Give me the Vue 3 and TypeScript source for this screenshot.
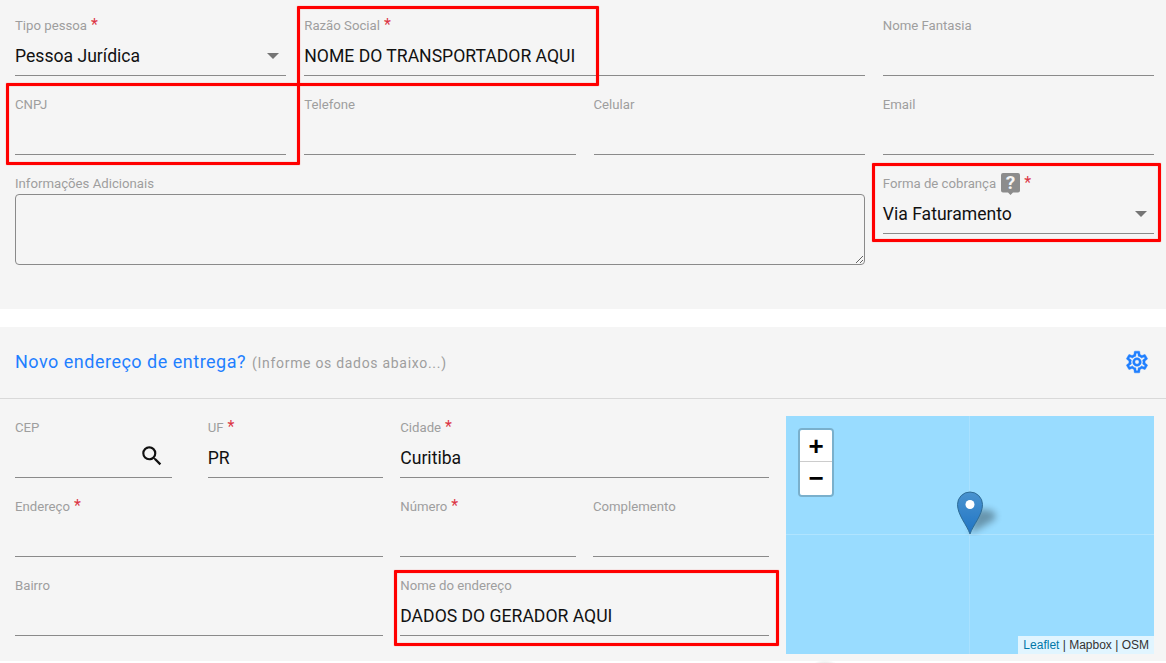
<template>
  <div class="page">
    <section class="card first">
      <div class="form-grid">
        <div v-for="f in dadosFields" :key="f.label" class="field" :class="f.cls">
          <label>
            {{ f.label }}
            <span v-if="f.required" class="req">*</span>
          </label>
          <div class="control">
            <span class="value">{{ f.value }}</span>
            <i v-if="f.select" class="caret"></i>
          </div>
        </div>
        <div class="field notes">
          <label>Informações Adicionais</label>
          <textarea></textarea>
        </div>
        <div class="field">
          <label>
            Forma de cobrança
            <svg class="help" viewBox="0 0 19 22" width="19" height="22">
              <path d="M2 0H17A2 2 0 0 1 19 2V17.500A2 2 0 0 1 17 19.500H12L9.500 22L7 19.500H2A2 2 0 0 1 0 17.500V2A2 2 0 0 1 2 0Z" fill="#8c8c8c" />
              <text x="9.500" y="16" text-anchor="middle" class="help-mark">?</text>
            </svg>
            <span class="req">*</span>
          </label>
          <div class="control">
            <span class="value">Via Faturamento</span>
            <i class="caret"></i>
          </div>
        </div>
      </div>
    </section>

    <section class="card second">
      <header class="card-head">
        <h3>Novo endereço de entrega? <small>(Informe os dados abaixo...)</small></h3>
        <svg class="gear" viewBox="0 0 24 24" width="26" height="26">
          <path fill="#1f7fff" stroke="#1f7fff" stroke-width="0.4" d="M12,8A4,4 0 0,1 16,12A4,4 0 0,1 12,16A4,4 0 0,1 8,12A4,4 0 0,1 12,8M12,10A2,2 0 0,0 10,12A2,2 0 0,0 12,14A2,2 0 0,0 14,12A2,2 0 0,0 12,10M10,22C9.75,22 9.54,21.82 9.5,21.58L9.13,18.93C8.5,18.68 7.96,18.34 7.44,17.94L4.95,18.95C4.73,19.03 4.46,18.95 4.34,18.73L2.34,15.27C2.21,15.05 2.27,14.78 2.46,14.63L4.57,12.97L4.5,12L4.57,11L2.46,9.37C2.27,9.22 2.21,8.95 2.34,8.73L4.34,5.27C4.46,5.05 4.73,4.96 4.95,5.05L7.44,6.05C7.96,5.66 8.5,5.32 9.13,5.07L9.5,2.42C9.54,2.18 9.75,2 10,2H14C14.25,2 14.46,2.18 14.5,2.42L14.87,5.07C15.5,5.32 16.04,5.66 16.56,6.05L19.05,5.05C19.27,4.96 19.54,5.05 19.66,5.27L21.66,8.73C21.79,8.95 21.73,9.22 21.54,9.37L19.43,11L19.5,12L19.43,13L21.54,14.63C21.73,14.78 21.79,15.05 21.66,15.27L19.66,18.73C19.54,18.95 19.27,19.04 19.05,18.95L16.56,17.95C16.04,18.34 15.5,18.68 14.87,18.93L14.5,21.58C14.46,21.82 14.25,22 14,22H10M11.25,4L10.88,6.61C9.68,6.86 8.62,7.5 7.85,8.39L5.44,7.35L4.69,8.65L6.8,10.2C6.4,11.37 6.4,12.64 6.8,13.8L4.68,15.36L5.43,16.66L7.86,15.62C8.63,16.5 9.68,17.14 10.87,17.38L11.24,20H12.76L13.13,17.39C14.32,17.14 15.37,16.5 16.14,15.62L18.57,16.66L19.32,15.36L17.2,13.81C17.6,12.64 17.6,11.37 17.2,10.2L19.31,8.65L18.56,7.35L16.15,8.39C15.38,7.5 14.32,6.86 13.12,6.62L12.75,4H11.25Z" />
        </svg>
      </header>
      <div class="card-body">
        <div class="form-grid address">
          <div v-for="f in enderecoFields" :key="f.label" class="field" :class="f.cls">
            <label>
              {{ f.label }}
              <span v-if="f.required" class="req">*</span>
            </label>
            <div class="control">
              <span class="value">{{ f.value }}</span>
              <svg v-if="f.search" class="search" viewBox="0 0 24 24" width="26" height="26">
                <path fill="#111" d="M15.5 14h-.79l-.28-.27A6.47 6.47 0 0 0 16 9.5 6.5 6.5 0 1 0 9.5 16c1.61 0 3.09-.59 4.23-1.57l.27.28v.79l5 4.99L20.49 19l-4.99-5zm-6 0C7.01 14 5 11.99 5 9.5S7.01 5 9.5 5 14 7.01 14 9.5 11.99 14 9.5 14z" />
              </svg>
            </div>
          </div>
        </div>
        <div class="map">
          <span class="seam-v"></span>
          <span class="seam-h"></span>
          <div class="zoom-ctl">
            <a>+</a>
            <a>−</a>
          </div>
          <svg class="marker" viewBox="0 0 50 46" width="50" height="46">
            <defs>
              <linearGradient id="pin" x1="0" y1="0" x2="0" y2="1">
                <stop offset="0" stop-color="#4a93cf" />
                <stop offset="1" stop-color="#1f74c4" />
              </linearGradient>
              <filter id="blur" x="-60%" y="-60%" width="220%" height="220%">
                <feGaussianBlur stdDeviation="3.5" />
              </filter>
            </defs>
            <path d="M14 44 L38 30 Q43 24 34 20 L20 19 Z" fill="#000" opacity="0.32" filter="url(#blur)" />
            <path d="M14 44 C11 35 1.5 25 1.5 14.5 A12.5 12.5 0 0 1 26.5 14.5 C26.5 25 17 35 14 44 Z" fill="url(#pin)" stroke="#2e6c97" stroke-width="1" />
            <circle cx="14" cy="14.5" r="4.5" fill="#fff" />
          </svg>
          <div class="attribution"><a>Leaflet</a> | Mapbox | OSM</div>
        </div>
      </div>
    </section>

    <!-- marcações em vermelho sobre o print -->
    <span class="mark m1"></span>
    <span class="mark m2"></span>
    <span class="mark m3"></span>
    <span class="mark m4"></span>
    <span class="fab-shadow"></span>
  </div>
</template>

<script setup lang="ts">
interface Field {
  label: string
  value?: string
  required?: boolean
  select?: boolean
  search?: boolean
  cls?: string
}

const dadosFields: Field[] = [
  { label: 'Tipo pessoa', value: 'Pessoa Jurídica', required: true, select: true },
  { label: 'Razão Social', value: 'NOME DO TRANSPORTADOR AQUI', required: true, cls: 'span-2' },
  { label: 'Nome Fantasia' },
  { label: 'CNPJ' },
  { label: 'Telefone' },
  { label: 'Celular' },
  { label: 'Email' },
]

const enderecoFields: Field[] = [
  { label: 'CEP', search: true, cls: 'cep' },
  { label: 'UF', value: 'PR', required: true },
  { label: 'Cidade', value: 'Curitiba', required: true, cls: 'span-2' },
  { label: 'Endereço', required: true, cls: 'span-2' },
  { label: 'Número', required: true },
  { label: 'Complemento' },
  { label: 'Bairro', cls: 'span-2' },
  { label: 'Nome do endereço', value: 'DADOS DO GERADOR AQUI', cls: 'span-2' },
]
</script>

<style>
html,
body {
  background: #fff;
}
</style>

<style scoped>
.page {
  position: relative;
  width: 1166px;
  height: 663px;
  overflow: hidden;
  font-family: Roboto, "Noto Sans", sans-serif;
}

.card {
  background: #f5f5f5;
}

.first {
  height: 295px;
  padding: 14px 12px 0 15px;
  margin-bottom: 18px;
}

.second {
  height: 334px;
}

.form-grid {
  display: grid;
  grid-template-columns: repeat(4, 1fr);
  column-gap: 18px;
  row-gap: 17px;
  align-content: start;
  flex: 1;
}

.form-grid.address {
  column-gap: 17px;
}

.span-2 {
  grid-column: span 2;
}

.field {
  min-width: 0;
}

.field label {
  display: flex;
  align-items: center;
  gap: 4px;
  height: 22px;
  font-size: 13.2px;
  color: #9e9e9e;
}

.req {
  color: #dc3545;
  font-size: 16px;
  line-height: 16px;
}

.help {
  margin-top: 2px;
  margin-left: 1px;
  overflow: visible;
}

.help-mark {
  font-family: Roboto, sans-serif;
  font-size: 19px;
  font-weight: 700;
  fill: #f5f5f5;
}

.control {
  display: flex;
  align-items: center;
  justify-content: space-between;
  height: 39px;
  border-bottom: 1px solid #8a8a8a;
  padding-right: 7px;
}

.value {
  font-size: 17.6px;
  color: #111;
  white-space: nowrap;
}

.caret {
  width: 0;
  height: 0;
  border-left: 6px solid transparent;
  border-right: 6px solid transparent;
  border-top: 6px solid #757575;
}

.notes {
  grid-column: span 3;
}

.notes textarea {
  display: block;
  width: 100%;
  height: 71px;
  box-sizing: border-box;
  background: transparent;
  border: 1px solid #8a8a8a;
  border-radius: 4px;
}

.card-head {
  display: flex;
  align-items: center;
  justify-content: space-between;
  box-sizing: border-box;
  height: 72px;
  padding: 0 16px 2px 15px;
  border-bottom: 1px solid #d9d9d9;
}

.card-head h3 {
  margin: 0;
  font-size: 18px;
  font-weight: 400;
  letter-spacing: 0.5px;
  color: #1f7fff;
}

.card-head small {
  margin-left: 1px;
  font-size: 14px;
  letter-spacing: 0.7px;
  color: #9e9e9e;
}

.card-body {
  display: flex;
  gap: 17.5px;
  padding: 17px 12px 0 15px;
}

.cep {
  margin-right: 18.75px;
}

.search {
  margin-top: -4px;
}

.map {
  position: relative;
  flex: none;
  width: 368px;
  height: 238px;
  background: #99dcff;
  overflow: hidden;
}

.seam-v {
  position: absolute;
  left: 183px;
  top: 0;
  bottom: 0;
  width: 1px;
  background: #a9e1ff;
}

.seam-h {
  position: absolute;
  left: 0;
  right: 0;
  top: 118px;
  height: 1px;
  background: #b0e4ff;
}

.zoom-ctl {
  position: absolute;
  left: 12px;
  top: 12px;
  width: 32px;
  border: 2px solid rgba(0, 0, 0, 0.2);
  border-radius: 4px;
  background-clip: padding-box;
}

.zoom-ctl a {
  display: block;
  height: 32px;
  box-sizing: border-box;
  text-align: center;
  background: #fff;
  color: #000;
  font: 700 26px/32px "Liberation Sans", Arial, sans-serif;
}

.zoom-ctl a:first-child {
  border-bottom: 1px solid #ccc;
  border-radius: 2px 2px 0 0;
}

.zoom-ctl a:last-child {
  height: 33px;
  border-radius: 0 0 2px 2px;
}

.marker {
  position: absolute;
  left: 170px;
  top: 74px;
}

.attribution {
  position: absolute;
  right: 0;
  bottom: 0;
  height: 18px;
  padding: 0 5px 0 5.5px;
  background: rgba(255, 255, 255, 0.7);
  font: 12px/18px "Liberation Sans", Arial, sans-serif;
  color: #333;
}

.attribution a {
  color: #0078a8;
}

.mark {
  position: absolute;
  box-sizing: border-box;
  border: 3px solid #f00;
  border-radius: 1px;
  box-shadow: 0 0 1px rgba(255, 0, 0, 0.7), inset 0 0 1px rgba(255, 0, 0, 0.7);
}

.m1 {
  left: 297px;
  top: 6px;
  width: 302px;
  height: 80px;
}

.m2 {
  left: 6px;
  top: 83px;
  width: 294px;
  height: 82px;
}

.m3 {
  left: 872px;
  top: 163px;
  width: 289px;
  height: 79px;
}

.m4 {
  left: 394px;
  top: 570px;
  width: 385px;
  height: 76px;
}

.fab-shadow {
  position: absolute;
  left: 812px;
  top: 660px;
  width: 26px;
  height: 12px;
  border-radius: 50%;
  background: radial-gradient(closest-side, #d8d8d8, rgba(216, 216, 216, 0));
}
</style>
